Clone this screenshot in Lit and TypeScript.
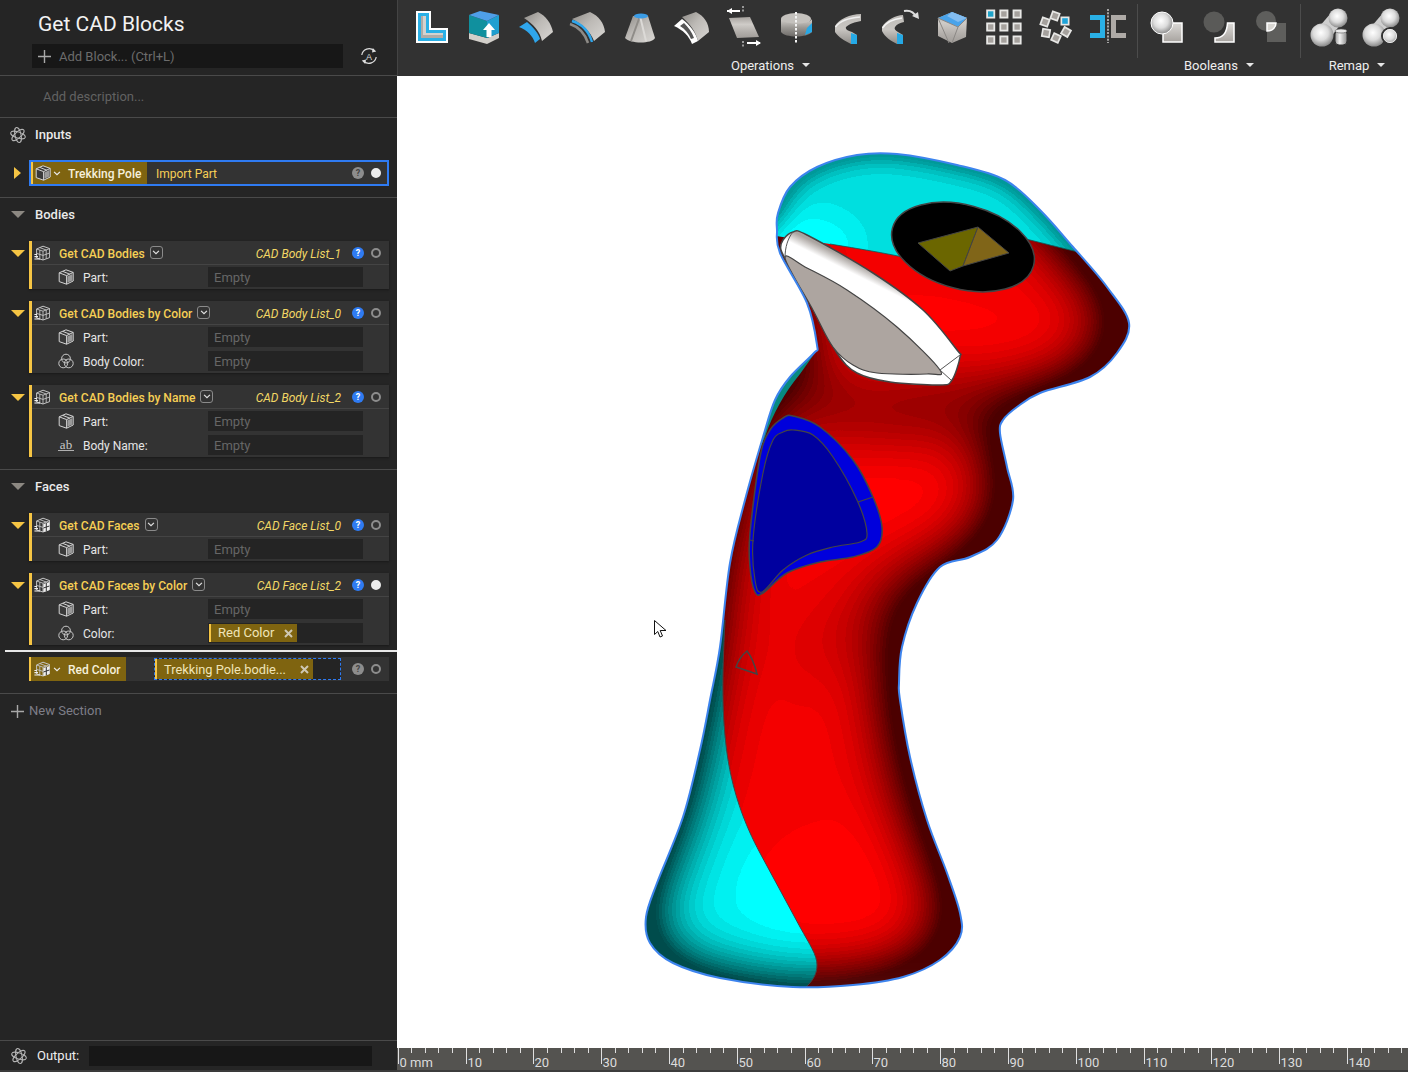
import { LitElement, html, css, svg } from "lit";
import { customElement } from "lit/decorators.js";

type P = [number, number];

function smooth(pts: P[], closed = true, k = 6): string {
  const n = pts.length;
  const at = (i: number) => (closed ? pts[(i + n) % n] : pts[Math.max(0, Math.min(n - 1, i))]);
  let d = `M${pts[0][0]} ${pts[0][1]}`;
  const last = closed ? n : n - 1;
  for (let i = 0; i < last; i++) {
    const p0 = at(i - 1), p1 = at(i), p2 = at(i + 1), p3 = at(i + 2);
    const c1x = p1[0] + (p2[0] - p0[0]) / k, c1y = p1[1] + (p2[1] - p0[1]) / k;
    const c2x = p2[0] - (p3[0] - p1[0]) / k, c2y = p2[1] - (p3[1] - p1[1]) / k;
    d += `C${c1x.toFixed(1)} ${c1y.toFixed(1)} ${c2x.toFixed(1)} ${c2y.toFixed(1)} ${p2[0]} ${p2[1]}`;
  }
  return d + (closed ? "Z" : "");
}

const OUTLINE: P[] = [
  [1005, 180], [957, 165], [897, 154], [857, 155], [817, 167], [790, 187], [778, 213], [777, 230], [780, 253],
  [807, 303], [817, 345], [814, 353], [790, 377], [775, 400], [763, 437], [745, 500], [730, 563], [720, 647], [710, 700],
  [700, 750], [683, 817], [657, 883], [646, 917], [650, 943], [673, 963], [720, 978], [793, 987], [853, 985], [903, 977],
  [940, 960], [960, 937], [960, 913], [947, 873], [927, 820], [910, 757], [900, 700], [899, 683], [902, 647], [917, 603],
  [940, 567], [970, 557], [997, 540], [1013, 500], [1007, 467], [1000, 433], [1003, 420], [1017, 407], [1040, 393],
  [1090, 377], [1117, 353], [1129, 323], [1107, 287], [1073, 247], [1040, 210],
];
const BLUE_OUT: P[] = [[793, 416], [820, 427], [853, 460], [873, 497], [882, 527], [877, 547], [853, 557], [820, 562], [787, 573], [763, 593], [755, 592], [750, 567], [750, 533], [760, 457], [770, 430], [783, 418]];
const BLUE_IN: P[] = [[793, 430], [813, 435], [833, 457], [857, 500], [867, 533], [860, 542], [833, 547], [807, 555], [783, 570], [762, 592], [755, 580], [753, 540], [763, 473], [773, 440], [783, 432]];
const TRIM: P[] = [[793, 232], [807, 235], [873, 273], [923, 310], [957, 350], [960, 357], [952, 380], [940, 385], [890, 382], [857, 373], [837, 353], [817, 313], [790, 267], [781, 250], [783, 240]];
const TRIM_IN: P[] = [[785, 258], [807, 268], [847, 290], [897, 327], [940, 370], [927, 374], [877, 373], [853, 365], [833, 347], [813, 310]];

/* maps a blurred field to stepped shades, which gives the contour bands of the CAD shading */
function table(lo: number, n: number, gamma = 1) {
  const out: string[] = [];
  for (let i = 0; i < n; i++) {
    const v = i / (n - 1);
    out.push((v < 0.5 ? lo : lo + (1 - lo) * Math.pow((v - 0.5) / 0.5, gamma)).toFixed(3));
  }
  return out.join(" ");
}

/* ---- small sidebar icons ---- */
const partIcon = () => html`<svg class="ico" viewBox="0 0 16 16">
  <path d="M8 .8 15.200 3.400V12L8.600 15.200 1.200 12.600V3.800Z" fill="#3a3a3a" stroke="#d4d4d4" stroke-width="1"/>
  <path d="M1.200 3.800 8.600 6.600 15.200 3.400M8.600 6.600V15.200M4.800 2.400 11.800 5.200" fill="none" stroke="#d4d4d4" stroke-width="1"/>
  <path d="M9.400 7.400 14.400 5V11.400L9.400 13.800Z" fill="#9a9a9a"/>
</svg>`;

const blockIcon = (faces = false) => html`<svg class="ico" viewBox="0 0 16 16">
  <path d="M2.600 4 9 1.200 15.600 3.600V12.600L9 15 2.600 13Z" fill="none" stroke="#c4c4c4" stroke-width="1"/>
  <path d="M2.600 4 9 6.200 15.600 3.600M9 6.200V15M5.800 2.600 12.200 5M5.800 5.200V14M12.200 5V13.800M2.600 8.400 9 10.400 15.600 8" fill="none" stroke="#c4c4c4" stroke-width=".9"/>
  ${faces ? svg`<path d="M9.400 7 15.400 5V13L9.400 15Z" fill="#eee"/><path d="M12.300 6V14M9.400 11 15.400 9" stroke="#333" stroke-width="1" fill="none"/>` : ""}
  <path d="M.4 9.500H3M.4 11.700H4M.4 14H6" stroke="#efefef" stroke-width="1.200"/>
</svg>`;

const atomIcon = () => html`<svg class="ico" viewBox="0 0 16 16" fill="none" stroke="#b5b5b5" stroke-width="1">
  <g transform="rotate(18 8 8)">
    <ellipse cx="8" cy="8" rx="7.600" ry="3"/>
    <ellipse cx="8" cy="8" rx="7.600" ry="3" transform="rotate(60 8 8)"/>
    <ellipse cx="8" cy="8" rx="7.600" ry="3" transform="rotate(120 8 8)"/>
  </g>
</svg>`;

const vennIcon = () => html`<svg class="ico" viewBox="0 0 16 16" fill="none" stroke="#c9c9c9" stroke-width="1">
  <circle cx="8" cy="5.600" r="4.400"/><circle cx="5.200" cy="10.400" r="4.400"/><circle cx="10.800" cy="10.400" r="4.400"/>
</svg>`;

const chevron = () => html`<svg class="chev" viewBox="0 0 9 6"><path d="M1 1 4.500 4.500 8 1" fill="none" stroke="currentColor" stroke-width="1.400"/></svg>`;

const addIcon = () => html`<svg class="plus" viewBox="0 0 13 13"><path d="M6.500 0V13M0 6.500H13" stroke="#a8a8a8" stroke-width="1.400"/></svg>`;

const closeIcon = () => html`<svg class="x" viewBox="0 0 9 9"><path d="M1 1 8 8M8 1 1 8" stroke="#cfc8b4" stroke-width="2"/></svg>`;

const syncIcon = () => html`<svg class="sync" viewBox="0 0 18 18">
  <path d="M1.800 8A7.300 7.300 0 0 1 14 3.700M16.200 10A7.300 7.300 0 0 1 4 14.300" fill="none" stroke="#dedede" stroke-width="1.200"/>
  <path d="M12.800 1 16.200 4.400 12 5.400ZM5.200 17 1.800 13.600 6 12.600Z" fill="#dedede"/>
  <text x="9" y="12.500" text-anchor="middle" class="synct">A</text>
</svg>`;

const help = (on: boolean) => html`<span class="help ${on ? "on" : ""}">?</span>`;
const dot = (full: boolean) => html`<span class="dot ${full ? "full" : ""}"></span>`;

/* ---- toolbar icons: 48×48 cell ---- */
const SW = "M12 15 26 9C34 13 39 20 41 29L30 38C28 28 21 21 12 15Z";
const ICONS = [
  svg`<path d="M8 8H23V25H40V40H8Z" fill="#fff"/><path d="M10 10H21V27H38V38H10Z" fill="#2ab0e6"/><path d="M13 13H18V30H35V35H13Z" fill="#b0aca8"/><path d="M15 13H18V30H35V32H15Z" fill="#d4d2cf"/>`,
  svg`<path d="M9 30 27 35 39 30V35L27 41 9 36Z" fill="#d2cfca"/><path d="M9 12 27 18V35L9 30Z" fill="#10909e"/><path d="M27 18 39 12V30L27 35Z" fill="#1f9fd0"/><path d="M9 12 20 8 39 12 27 18Z" fill="#4f9fe8"/><path d="M29 20 35 27H31.500V34H26.500V27H23Z" fill="#fff"/>`,
  svg`<path d=${SW} fill="url(#gSw)"/><path d="M7 24 15 19C21 24 27 31 28 36L23 40C21 33 15 27 7 24Z" fill="#2fa6ec"/>`,
  svg`<path d="M8 16 26 9C35 13 40 20 41 29L30 38C27 29 18 21 8 16Z" fill="url(#gSw)"/><path d="M8 18C18 21 25 29 28 39" fill="none" stroke="#2fa6ec" stroke-width="2.400"/><path d="M6 21C15 24 21 31 24 40" fill="none" stroke="#8d8a86" stroke-width="2.500"/>`,
  svg`<path d="M17 13H32L39 35C36 41 14 41 9 35Z" fill="url(#gSw)"/><path d="M24 13 15 38" stroke="#8f8c88" stroke-width="2"/><path d="M24 13 30 38" stroke="#dcdad7" stroke-width="2"/><ellipse cx="25" cy="13" rx="7" ry="2.500" fill="#3a9ce6"/>`,
  svg`<path d="M14 14 28 9C36 13 41 20 41 29L30 38C28 29 22 21 14 14Z" fill="url(#gSw)"/><path d="M6 23 14 16C22 22 28 30 30 38L24 41C21 33 15 27 6 23Z" fill="#fff"/><path d="M12 23 16 20C20 24 24 29 26 35L23 36C21 31 17 26 12 23Z" fill="#555"/>`,
  svg`<path d="M23 3V10M23 38V45" stroke="#ddd" stroke-width="1.200" stroke-dasharray="2 1.500"/><path d="M9 15 30 14 39 34 17 35Z" fill="url(#gSw2)"/><path d="M7 8H20" stroke="#fff" stroke-width="2"/><path d="M7 8 12 5V11Z" fill="#fff"/><path d="M27 40H40" stroke="#fff" stroke-width="2"/><path d="M41 40 36 37V43Z" fill="#fff"/>`,
  svg`<ellipse cx="24" cy="16" rx="15" ry="6" fill="#c4c1bd"/><path d="M9 16V29C13 35 35 35 40 29V16C38 22 12 22 9 16Z" fill="url(#gDisc)"/><path d="M33 32 40 29V20L35 25Z" fill="#26a8e6"/><path d="M24 9V40" stroke="#f4f4f4" stroke-width="2" stroke-dasharray="2.500 1.500"/>`,
  svg`<path d="M37 11C26 11 15 16 11 23V29C14 34 21 38 27 41L33 41V32L28 29C24 28 21 26 22 24 25 21 31 19 37 18Z" fill="url(#gBand)"/><path d="M11.500 24C15 19 24 15 36 14" fill="none" stroke="#efefef" stroke-width="1.500"/><path d="M27 30 33 32V41L27 41Z" fill="#25a9e5"/>`,
  svg`<path d="M27 12C20 12 10 17 6 24V28C9 34 15 38 21 41L27 41V32L22 29C19 27 18 26 19 24 21 21 24 20 28 19Z" fill="url(#gBand)"/><path d="M6.500 25C10 20 17 16 26 15" fill="none" stroke="#f4f4f4" stroke-width="1.500"/><path d="M21 30 27 32V41L21 41Z" fill="#25a9e5"/><path d="M28 8C34 7 38 9 40 14" fill="none" stroke="#ddd" stroke-width="2"/><path d="M43 16 36 13 42 9Z" fill="#ddd"/>`,
  svg`<path d="M10 15 24 9 39 15 38 34 24 40 10 33Z" fill="url(#gSw2)"/><path d="M10 15 24 9 39 15 30 24Z" fill="#49a3ea"/><path d="M19 13 24 9 39 15 30 19Z" fill="#83bdf0"/><path d="M10 15 21 40M30 24 24 40 M10 15 30 24 39 15" stroke="#8b8885" fill="none" stroke-width="1"/>`,
  ...[0].map(() => {
    const cells = [];
    for (let r = 0; r < 3; r++) for (let c = 0; c < 3; c++) {
      const x = 6.2 + c * 13.2, y = 6.5 + r * 13;
      cells.push(svg`<rect x=${x} y=${y} width="9" height="9" fill="#e8e8e6"/><rect x=${x + 1.8} y=${y + 1.8} width="5.4" height="5.4" fill=${r === 0 && c === 0 ? "#1ea3c9" : "#a5a19d"}/>`);
    }
    return svg`${cells}`;
  }),
  svg`${([[23, 13, 20], [33, 18, 0], [34, 29, 30], [24, 35, 25], [14, 30, 10], [13, 19, 20]] as number[][]).map(([x, y, a], i) => svg`<g transform="rotate(${a} ${x} ${y})"><rect x=${x - 4.5} y=${y - 4.5} width="9" height="9" fill="#e8e8e6"/><rect x=${x - 2.8} y=${y - 2.8} width="5.6" height="5.6" fill=${i === 1 ? "#1ea3d9" : "#a5a19d"}/></g>`)}`,
  svg`<path d="M6 12H21V35H6V30H16V17H6Z" fill="#2ab0e6"/><path d="M42 12H27V35H42V30H32V17H42Z" fill="#aeaaa6"/><path d="M24 6V40" stroke="#ccc" stroke-width="1.500" stroke-dasharray="2 1.300"/>`,
  svg`<rect x="20" y="20" width="19" height="19" fill="url(#gSq)" stroke="#fff" stroke-width="1.500"/><circle cx="19" cy="20" r="11" fill="url(#gSph)" stroke="#fff" stroke-width="1"/>`,
  svg`<circle cx="19" cy="19" r="10.500" fill="#5a5a58"/><path d="M39 20V39H20V35C29 35 32 29 32.500 20Z" fill="url(#gSq)" stroke="#fff" stroke-width="1.500"/>`,
  svg`<circle cx="19" cy="18" r="10" fill="#5e5e5c"/><rect x="20" y="20" width="19" height="19" fill="#5e5e5c"/><path d="M20 20H29C29 24 26 28 20 28Z" fill="#d8d6d2" stroke="#fff" stroke-width="1.500"/>`,
  svg`<path d="M14 24 26 10 38 18 26 34Z" fill="#cfcfcf"/><circle cx="33" cy="15" r="9.500" fill="url(#gSph)"/><circle cx="17" cy="32" r="11.500" fill="url(#gSph)"/><rect x="30" y="27" width="12" height="15" rx="4" fill="url(#gCyl)" stroke="#333" stroke-width="1"/><ellipse cx="36" cy="28" rx="6" ry="2" fill="#e9e9e9" stroke="#555" stroke-width=".6"/>`,
  svg`<path d="M14 24 26 10 38 18 26 34Z" fill="#cfcfcf"/><circle cx="33" cy="15" r="9.500" fill="url(#gSph)"/><circle cx="17" cy="32" r="11.500" fill="url(#gSph)"/><circle cx="33" cy="33" r="8" fill="url(#gSph)" stroke="#333" stroke-width="2"/><circle cx="33" cy="33" r="6.500" fill="none" stroke="#eee" stroke-width="1"/>`,
];

const TB = (from: number, to: number) => ICONS.slice(from, to).map((d) => html`<svg class="tool" viewBox="0 0 48 48">${d}</svg>`);

@customElement("tool-bar")
class ToolBar extends LitElement {
  static styles = css`
    :host { display: flex; height: 76px; background: #323232; padding-left: 8px; box-sizing: border-box; border-left: 1px solid #444; font: 400 13px Roboto, sans-serif; color: #eee; }
    .defs { display: block; width: 0; height: 0; }
    .grp { display: flex; flex-direction: column; }
    .icons { display: flex; height: 55px; padding-top: 3px; box-sizing: border-box; }
    .tool { width: 48px; height: 48px; margin: 0 2px; flex: none; }
    .lbl { display: flex; justify-content: center; align-items: center; gap: 8px; height: 20px; }
    .lbl.op { padding-left: 1px; }
    .lbl.re { padding-left: 4px; }
    .car { width: 0; height: 0; border-left: 4px solid transparent; border-right: 4px solid transparent; border-top: 4px solid #e6e6e6; }
    .sep { width: 1px; height: 54px; margin: 4px 3px 0 3px; background: #4c4c4c; }
    .sep2 { margin: 4px 2px 0 3px; }
  `;
  render() {
    return html`<svg class="defs"><defs>
      <linearGradient id="gSw" x1="0" y1="0" x2="1" y2="1"><stop offset="0" stop-color="#8e8b87"/><stop offset=".45" stop-color="#bdbab6"/><stop offset="1" stop-color="#d9d7d4"/></linearGradient>
      <linearGradient id="gSw2" x1="0" y1="0" x2="0" y2="1"><stop offset="0" stop-color="#a7a39f"/><stop offset=".35" stop-color="#cfccc8"/><stop offset=".7" stop-color="#b3afab"/><stop offset="1" stop-color="#a09c98"/></linearGradient>
      <linearGradient id="gBand" x1="0" y1="0" x2="0" y2="1"><stop offset="0" stop-color="#bebbb7"/><stop offset=".5" stop-color="#c9c6c2"/><stop offset="1" stop-color="#8f8c88"/></linearGradient>
      <linearGradient id="gDisc" x1="0" y1="0" x2="0" y2="1"><stop offset="0" stop-color="#d2cfcb"/><stop offset=".5" stop-color="#9a9793"/><stop offset="1" stop-color="#6f6c69"/></linearGradient>
      <linearGradient id="gSq" x1="0" y1="0" x2="0" y2="1"><stop offset="0" stop-color="#dbd9d6"/><stop offset="1" stop-color="#a7a39f"/></linearGradient>
      <linearGradient id="gCyl" x1="0" y1="0" x2="1" y2="0"><stop offset="0" stop-color="#999"/><stop offset=".4" stop-color="#f2f2f2"/><stop offset="1" stop-color="#888"/></linearGradient>
      <radialGradient id="gSph" cx=".45" cy=".4" r=".65"><stop offset="0" stop-color="#fff"/><stop offset=".5" stop-color="#dcdcdc"/><stop offset="1" stop-color="#7c7c7c"/></radialGradient>
    </defs></svg>
      <div class="grp"><div class="icons">${TB(0, 14)}</div><div class="lbl op">Operations <i class="car"></i></div></div>
      <div class="sep"></div>
      <div class="grp"><div class="icons">${TB(14, 17)}</div><div class="lbl">Booleans <i class="car"></i></div></div>
      <div class="sep sep2"></div>
      <div class="grp"><div class="icons">${TB(17, 19)}</div><div class="lbl re">Remap <i class="car"></i></div></div>`;
  }
}

@customElement("side-panel")
class SidePanel extends LitElement {
  static styles = css`
    :host { display: flex; flex-direction: column; width: 397px; height: 1072px; flex: none; background: #252525; color: #e8e8e8; font: 400 13px/16px Roboto, sans-serif; box-sizing: border-box; }
    .ico { width: 16px; height: 16px; display: block; flex: none; }
    .head { height: 76px; box-sizing: border-box; border-bottom: 1px solid #4a4a4a; padding: 11px 0 0 32px; }
    h1 { margin: 0 0 7px 6px; font: 400 21px/26px Roboto, sans-serif; color: #f2f2f2; height: 26px; }
    .addrow { display: flex; align-items: center; gap: 17px; }
    .add { width: 311px; height: 24px; background: #171717; display: flex; align-items: center; gap: 8px; padding: 1px 0 0 6px; box-sizing: border-box; color: #6c6c6c; }
    .plus { width: 13px; height: 13px; flex: none; }
    .sync { width: 18px; height: 18px; flex: none; margin-top: -1px; }
    .synct { font: 400 9px "Liberation Sans", sans-serif; fill: #dedede; }
    .desc { height: 42px; box-sizing: border-box; border-bottom: 1px solid #4a4a4a; padding: 13px 0 0 43px; color: #626262; }
    .sec { border-bottom: 1px solid #4a4a4a; }
    .sh { height: 33px; display: flex; align-items: center; gap: 9px; padding-left: 10px; font-weight: 500; color: #eaeaea; }
    .sh .cell { width: 16px; display: flex; justify-content: center; }
    .tri { width: 0; height: 0; border-left: 7px solid transparent; border-right: 7px solid transparent; border-top: 7px solid #8c8882; }
    .sb { padding: 10px 0 12px; display: flex; flex-direction: column; gap: 12px; }
    .sb.inp { padding: 9px 0 11px; }
    .sb.last { padding-bottom: 0; }
    .wrap { display: flex; }
    .gut { width: 29px; flex: none; padding: 9px 0 0 11px; box-sizing: border-box; }
    .gut.g0 { padding-top: 0; }
    .ty { width: 0; height: 0; border-left: 7px solid transparent; border-right: 7px solid transparent; border-top: 7px solid #f6c544; }
    .tr { width: 0; height: 0; margin: 7px 0 0 3px; border-top: 6.500px solid transparent; border-bottom: 6.500px solid transparent; border-left: 7px solid #f6c544; }
    .card { width: 360px; box-sizing: border-box; background: #333; border-left: 3px solid #f6c544; box-shadow: 0 1px 2px #1a1a1a; }
    .ch { height: 24px; box-sizing: border-box; border-bottom: 1px solid #444; display: flex; align-items: center; padding: 0 8px 0 2px; }
    .title { margin-left: 9px; padding-top: 2px; color: #f6cf55; font-weight: 500; font-size: 12.100px; }
    .box { width: 13px; height: 13px; margin-left: 5px; border: 1px solid #8a8a8a; border-radius: 3px; box-sizing: border-box; display: flex; align-items: center; justify-content: center; color: #e2e2e2; }
    .chev { width: 8px; height: 5px; display: block; flex: none; }
    .res { margin-left: auto; padding-top: 2px; font-style: italic; color: #f2d765; font-size: 12px; margin-right: 11px; }
    .help { width: 12px; height: 12px; border-radius: 50%; font: 700 9px/12px Roboto, sans-serif; text-align: center; flex: none; margin-right: 7px; background: #8d8d8d; color: #444; }
    .help.on { background: #2f7bf2; color: #fff; }
    .dot { width: 10px; height: 10px; border-radius: 50%; border: 2px solid #8d8d8d; box-sizing: border-box; flex: none; }
    .dot.full { background: #ececec; border-color: #ececec; }
    .row { height: 24px; display: flex; align-items: center; padding-left: 26px; }
    .row label { margin-left: 9px; padding-top: 1px; flex: 1; color: #e6e6e6; font-size: 12px; }
    .field { width: 155px; height: 20px; margin-right: 26px; background: #242424; color: #666; padding: 1px 0 0 6px; box-sizing: border-box; display: flex; align-items: center; }
    .field.chip { padding: 0 0 0 1px; }
    .pill { height: 18px; display: flex; align-items: center; background: #7f6410; border-left: 2px solid #f6c544; color: #f0e4b8; padding: 0 4px 0 7px; gap: 10px; }
    .x { width: 9px; height: 9px; flex: none; display: block; }
    .ab { width: 16px; flex: none; text-align: center; font: 400 13px/10px "Liberation Serif", serif; color: #c9c9c9; border-bottom: 1px solid #b0b0b0; }
    .input { height: 26px; width: 360px; box-sizing: border-box; border: 2px solid #2f7bf2; background: #333; display: flex; align-items: center; padding-right: 6px; }
    .tile { height: 100%; flex: none; background: #7f6410; border-left: 2px solid #f6c544; display: flex; align-items: center; box-sizing: border-box; color: #f6f0dc; font-weight: 500; font-size: 12px; }
    .tile .chev { margin-right: 7px; color: #eee; }
    .tile span { padding-top: 1px; }
    .tile.a { width: 116px; padding-left: 2px; }
    .tile.a .chev { margin-left: 2px; }
    .tile.b { width: 97px; padding-left: 3px; }
    .tile.b .chev { margin-left: 3px; }
    .imp { margin-left: 9px; padding-top: 1px; color: #f6cf55; margin-right: auto; font-size: 12px; }
    .drop { height: 2px; margin: 5px 0 5px 5px; background: #e8e8e8; }
    .redwrap { padding: 0 0 12px 29px; border-bottom: 1px solid #4a4a4a; }
    .redrow { width: 360px; height: 24px; background: #333; display: flex; align-items: center; padding-right: 8px; box-sizing: border-box; }
    .dash { width: 187px; height: 22px; flex: none; margin: 0 11px 0 28px; border: 1px dashed #2f7bf2; background: #242424; box-sizing: border-box; display: flex; align-items: center; }
    .dash .pill { height: 20px; width: 158px; box-sizing: border-box; justify-content: space-between; font-size: 12.800px; padding-top: 1px; }
    .new { display: flex; align-items: center; gap: 5px; padding: 9px 0 0 11px; color: #7e7e88; height: 16px; }
    .space { flex: 1; }
    .out { height: 29px; border-top: 1px solid #4a4a4a; border-bottom: 2px solid #3a3a3a; display: flex; align-items: center; padding: 0 0 0 11px; }
    .out b { font-weight: 400; margin-left: 10px; width: 52px; color: #eee; padding-top: 1px; }
    .outf { width: 283px; height: 20px; background: #171717; }
  `;

  card(ic: unknown, title: string, res: string, rows: [unknown, string, unknown?][], full = false) {
    return html`<div class="wrap">
      <div class="gut"><div class="ty"></div></div>
      <div class="card">
        <div class="ch">${ic}<span class="title">${title}</span><span class="box">${chevron()}</span><span class="res">${res}</span>${help(true)}${dot(full)}</div>
        ${rows.map(([i, l, f]) => html`<div class="row">${i}<label>${l}</label>${f ?? html`<div class="field">Empty</div>`}</div>`)}
      </div>
    </div>`;
  }

  render() {
    const part = partIcon();
    const ab = html`<span class="ab">ab</span>`;
    return html`
      <div class="head">
        <h1>Get CAD Blocks</h1>
        <div class="addrow"><div class="add">${addIcon()}<span>Add Block... (Ctrl+L)</span></div>${syncIcon()}</div>
      </div>
      <div class="desc">Add description...</div>
      <div class="sec">
        <div class="sh"><span class="cell">${atomIcon()}</span>Inputs</div>
        <div class="sb inp"><div class="wrap">
          <div class="gut g0"><div class="tr"></div></div>
          <div class="input"><div class="tile a">${partIcon()}${chevron()}<span>Trekking Pole</span></div><span class="imp">Import Part</span>${help(false)}${dot(true)}</div>
        </div></div>
      </div>
      <div class="sec">
        <div class="sh"><span class="cell"><i class="tri"></i></span>Bodies</div>
        <div class="sb">
          ${this.card(blockIcon(), "Get CAD Bodies", "CAD Body List_1", [[part, "Part:"]])}
          ${this.card(blockIcon(), "Get CAD Bodies by Color", "CAD Body List_0", [[part, "Part:"], [vennIcon(), "Body Color:"]])}
          ${this.card(blockIcon(), "Get CAD Bodies by Name", "CAD Body List_2", [[part, "Part:"], [ab, "Body Name:"]])}
        </div>
      </div>
      <div>
        <div class="sh"><span class="cell"><i class="tri"></i></span>Faces</div>
        <div class="sb last">
          ${this.card(blockIcon(true), "Get CAD Faces", "CAD Face List_0", [[part, "Part:"]])}
          ${this.card(blockIcon(true), "Get CAD Faces by Color", "CAD Face List_2", [[part, "Part:"], [vennIcon(), "Color:", html`<div class="field chip"><div class="pill">Red Color ${closeIcon()}</div></div>`]], true)}
        </div>
      </div>
      <div class="drop"></div>
      <div class="redwrap">
        <div class="redrow">
          <div class="tile b">${blockIcon(true)}${chevron()}<span>Red Color</span></div>
          <div class="dash"><div class="pill"><span>Trekking Pole.bodie...</span>${closeIcon()}</div></div>
          ${help(false)}${dot(false)}
        </div>
      </div>
      <div class="new">${addIcon()}<span>New Section</span></div>
      <div class="space"></div>
      <div class="out">${atomIcon()}<b>Output:</b><div class="outf"></div></div>`;
  }
}

@customElement("model-view")
class ModelView extends LitElement {
  static styles = css`
    :host { display: block; flex: 1; background: #fff; min-height: 0; }
    svg { display: block; width: 100%; height: 100%; }
  `;
  render() {
    const body = smooth(OUTLINE);
    const red = (v: number) => `rgb(${Math.round(v * 255)},0,0)`;
    const cyan = (v: number) => { const c = Math.round(v * 255); return `rgb(0,${c},${c})`; };
    const el = (fill: string, cx: number, cy: number, rx: number, ry: number, rot = 0) =>
      svg`<ellipse fill=${fill} cx=${cx} cy=${cy} rx=${rx} ry=${ry} transform="rotate(${rot} ${cx} ${cy})"></ellipse>`;
    const redT = table(0.3, 34);
    const tealT = table(0.3, 28);
    const topT = table(0.6, 14);
    return html`<svg viewBox="397 76 1011 972" preserveAspectRatio="none">
      <defs>
        <clipPath id="cb"><path d=${body}></path></clipPath>
        <clipPath id="ct"><path d="M725 620C722 680 722 710 726 745 731 790 745 825 760 853L800 927C810 945 817 955 817 965 817 975 812 983 800 992L620 1000V620Z"></path></clipPath>
        <clipPath id="cu"><path d="M770 235 830 244C860 249 885 253 907 258L1018 237 1078 252V140H770Z"></path></clipPath>
        <filter id="fr" filterUnits="userSpaceOnUse" x="560" y="100" width="640" height="940" color-interpolation-filters="sRGB">
          <feGaussianBlur stdDeviation="32"></feGaussianBlur>
          <feComponentTransfer><feFuncR type="discrete" tableValues=${redT}></feFuncR></feComponentTransfer>
        </filter>
        <filter id="ft" filterUnits="userSpaceOnUse" x="560" y="100" width="640" height="940" color-interpolation-filters="sRGB">
          <feGaussianBlur stdDeviation="30"></feGaussianBlur>
          <feComponentTransfer><feFuncG type="discrete" tableValues=${tealT}></feFuncG><feFuncB type="discrete" tableValues=${tealT}></feFuncB></feComponentTransfer>
        </filter>
        <filter id="fu" filterUnits="userSpaceOnUse" x="560" y="100" width="640" height="940" color-interpolation-filters="sRGB">
          <feGaussianBlur stdDeviation="14"></feGaussianBlur>
          <feComponentTransfer><feFuncG type="discrete" tableValues=${topT}></feFuncG><feFuncB type="discrete" tableValues=${topT}></feFuncB></feComponentTransfer>
        </filter>
        <linearGradient id="trimH" gradientUnits="userSpaceOnUse" x1="850" y1="290" x2="862" y2="266"><stop offset="0" stop-color="#fff"></stop><stop offset=".6" stop-color="#fff"></stop><stop offset="1" stop-color="#aaa4a0"></stop></linearGradient>
      </defs>
      <g clip-path="url(#cb)">
        <g filter="url(#fr)">
          <rect x="560" y="100" width="640" height="940" fill="#000"></rect>
          <path d=${body} fill=${red(0.95)} transform="translate(-10 -3)"></path>
          ${el(red(1), 838, 895, 85, 75)}
          ${el(red(1), 880, 490, 75, 60, -25)}
          ${el(red(1), 965, 340, 125, 32, 15)}
          ${el(red(0.35), 925, 408, 110, 17, -3)}
          ${el(red(0.4), 910, 590, 62, 16, -28)}
          ${el(red(0.35), 808, 395, 24, 24)}
          ${el(red(0.75), 845, 635, 65, 16, -30)}
        </g>
        <g clip-path="url(#ct)"><g filter="url(#ft)">
          <rect x="560" y="100" width="640" height="940" fill="#000"></rect>
          <path d=${body} fill=${cyan(0.93)}></path>
          ${el(cyan(1), 815, 895, 85, 78)}
        </g></g>
        <g clip-path="url(#cu)"><g filter="url(#fu)">
          <rect x="560" y="100" width="640" height="940" fill="#000"></rect>
          <path d=${body} fill=${cyan(0.84)}></path>
          ${el(cyan(1), 805, 245, 50, 30)}
        </g></g>
        <path d="M817 350 800 374C785 392 772 415 765 437L750 470 740 470 780 340Z" fill="#078a80"></path>
        <path d="M725 620C722 680 722 710 726 745 731 790 745 825 760 853L800 927C810 945 817 955 817 965 817 975 812 983 800 992" fill="none" stroke="#444" stroke-width="1"></path>
        <path d="M830 244C860 249 885 253 907 258M1018 237 1078 252" fill="none" stroke="#0a5a5a" stroke-width=".8"></path>
      </g>

      <ellipse cx="963" cy="247" rx="73" ry="42" transform="rotate(15 963 247)" fill="#000" stroke="#444" stroke-width="1.500"></ellipse>
      <path d="M918 243 978 227 963 266 950 271Z" fill="#6b6600" stroke="#444"></path>
      <path d="M978 227 1009 253 963 266Z" fill="#806518" stroke="#444"></path>

      <path d=${smooth(TRIM)} fill="url(#trimH)" stroke="#444" stroke-width="1.500"></path>
      <path d=${smooth(TRIM_IN)} fill="#ada5a0" stroke="#444" stroke-width="1.200"></path>
      <path d="M793 232C788 238 785 247 785 258M940 370 960 355M940 370 951 380" fill="none" stroke="#555" stroke-width="1"></path>

      <path d=${smooth(BLUE_OUT)} fill="#0000dc" stroke="#444" stroke-width="1.500"></path>
      <path d=${smooth(BLUE_IN)} fill="#00009f" stroke="#444" stroke-width="1.200"></path>
      <path d="M858 502 873 497M750 540 754 541" stroke="#444" stroke-width="1.200"></path>
      <path d="M747 651C742 655 738 661 736 667L757 674C755 666 751 656 747 651Z" fill="none" stroke="#444" stroke-width="1.500"></path>

      <path d=${body} fill="none" stroke="#3d84ee" stroke-width="2"></path>

      <path d="M654.500 620.500V634.500L657.800 631.500 660 637 662.500 636 660.200 630.500H666Z" fill="#fff" stroke="#111" stroke-width="1"></path>
    </svg>`;
  }
}

@customElement("ruler-bar")
class RulerBar extends LitElement {
  static styles = css`
    :host { display: block; height: 24px; background: #545350; flex: none; }
    svg { display: block; width: 1011px; height: 24px; }
    text { font: 400 13px Roboto, sans-serif; fill: #dcdcdc; }
  `;
  render() {
    const ticks = [];
    const step = 6.78;
    for (let mm = 0; mm <= 150; mm += 2) {
      const x = Math.round(0.8 + mm * step) + 0.5;
      if (x > 1011) break;
      const major = mm % 10 === 0;
      ticks.push(svg`<line x1=${x} x2=${x} y1="0" y2=${major ? 16 : 5} stroke="#e0e0e0" stroke-width="1"></line>`);
      if (major) ticks.push(svg`<text x=${x + 1} y="19">${mm === 0 ? "0 mm" : mm}</text>`);
    }
    return html`<svg viewBox="0 0 1011 24">${ticks}<rect y="22" width="1011" height="2" fill="#3c3c3c"></rect></svg>`;
  }
}

@customElement("app-root")
export class AppRoot extends LitElement {
  static styles = css`
    :host { display: flex; width: 1408px; height: 1072px; overflow: hidden; background: #252525; }
    .right { flex: 1; min-width: 0; display: flex; flex-direction: column; }
  `;
  render() {
    return html`
      <side-panel></side-panel>
      <div class="right">
        <tool-bar></tool-bar>
        <model-view></model-view>
        <ruler-bar></ruler-bar>
      </div>`;
  }
}
